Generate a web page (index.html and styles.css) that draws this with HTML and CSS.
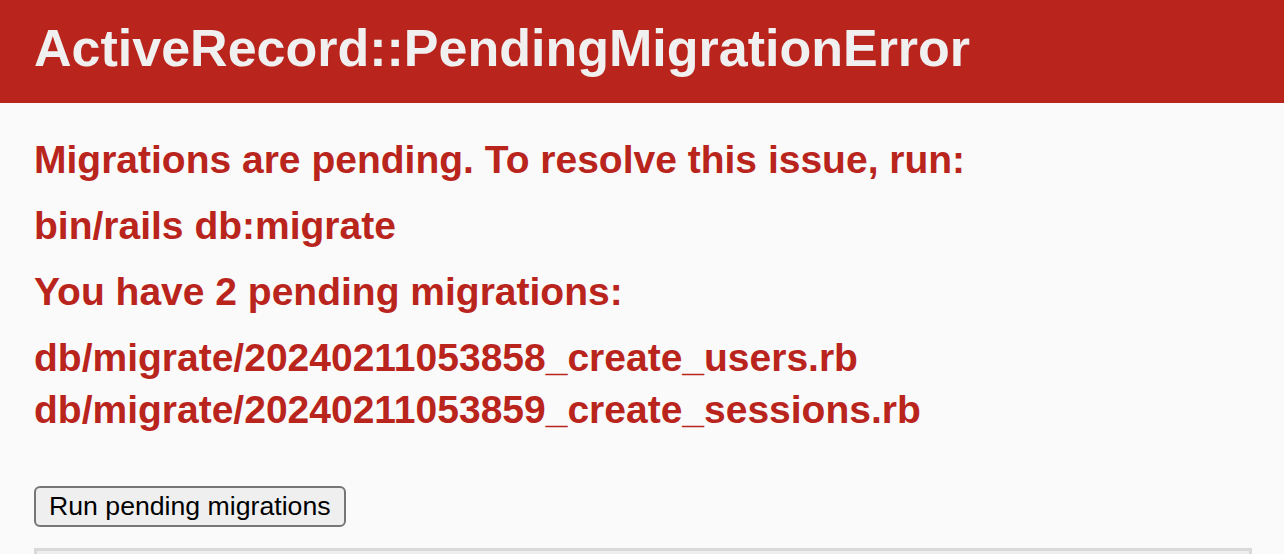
FILE: index.html
```html
<!DOCTYPE html>
<html lang="en">
<head>
<meta charset="utf-8">
<title>Action Controller: Exception caught</title>
<link rel="stylesheet" href="styles.css">
</head>
<body>
  <header class="header">
    <h1 class="title">ActiveRecord::PendingMigrationError</h1>
  </header>
  <main class="container">
    <div class="message">
      <p class="para">Migrations are pending. To resolve this issue, run:</p>
      <p class="para">bin/rails db:migrate</p>
      <p class="para">You have 2 pending migrations:</p>
      <p class="para">db/migrate/20240211053858_create_users.rb<br>db/migrate/20240211053859_create_sessions.rb</p>
    </div>
    <div class="actions">
      <form class="action-form" onsubmit="return false;">
        <button class="action-btn" type="submit">Run pending migrations</button>
      </form>
    </div>
    <div class="source"></div>
  </main>
</body>
</html>
```

FILE: styles.css
```css
* { box-sizing: border-box; }
html, body {
  margin: 0;
  padding: 0;
  background: #FAFAFA;
}
body {
  font-family: "Liberation Sans", Arial, Helvetica, sans-serif;
  color: #333;
}
.header {
  background: #B9251C;
  color: #F0F0F0;
  padding: 20px 34px 26px;
}
.title {
  margin: 0;
  font-size: 52px;
  line-height: 57px;
  font-weight: 700;
}
.container {
  padding: 0 32px 0 34px;
}
.message {
  padding-top: 31px;
  display: flex;
  flex-direction: column;
  gap: 14px;
}
.para {
  margin: 0;
  color: #B9251C;
  font-size: 39px;
  line-height: 52px;
  font-weight: 700;
}
.actions {
  padding-top: 50px;
}
.action-form { margin: 0; }
.action-btn {
  font-family: "Liberation Sans", Arial, Helvetica, sans-serif;
  font-size: 26.67px;
  height: 41px;
  padding: 0 13px;
  color: #000;
  background: #EFEFEF;
  border: 2px solid #767676;
  border-radius: 6px;
}
.source {
  margin-top: 21px;
  height: 40px;
  border: 3px solid #D9D9D9;
  background: #EEEEEE;
}
```
